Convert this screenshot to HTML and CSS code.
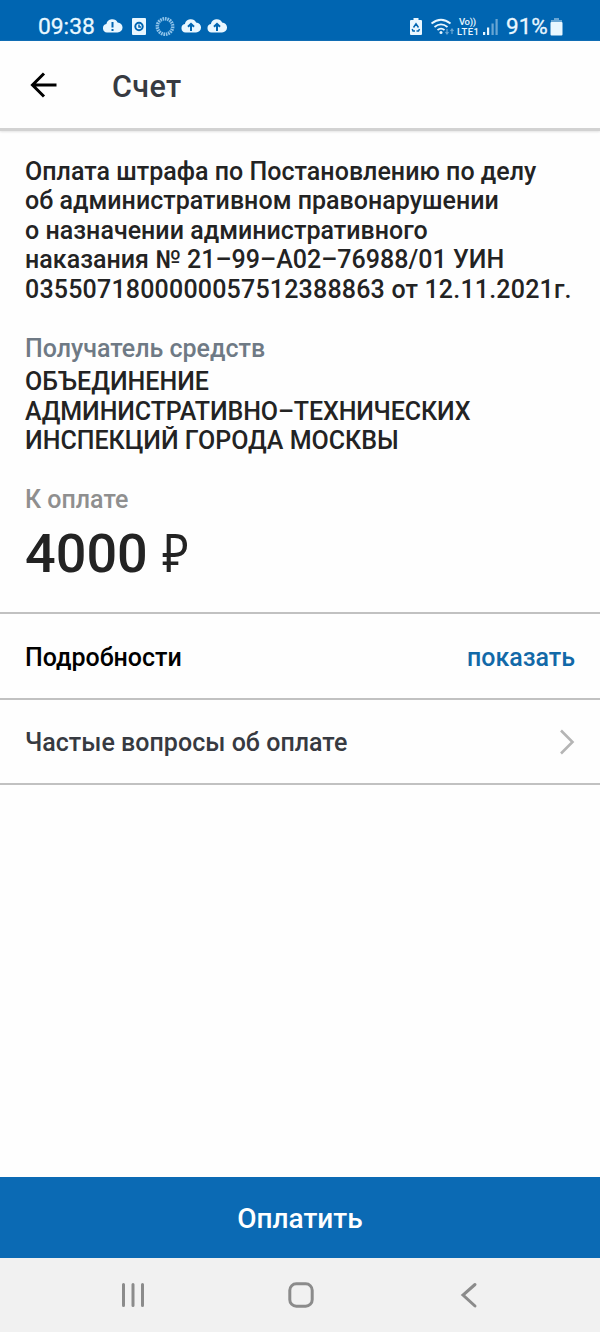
FILE: index.html
```html
<!DOCTYPE html>
<html lang="ru">
<head>
  <meta charset="UTF-8">
  <title>Счет</title>
  <link rel="stylesheet" href="styles.css">
</head>
<body>
  <div class="status-bar">
    <span class="time">09:38</span>
    <svg class="status-icons" width="130" height="24" viewBox="0 0 130 24">
      <defs>
        <path id="cloud" d="M5 17.500a4.300 4.300 0 0 1-.6-8.500A6 6 0 0 1 15.600 7.500A4.900 4.900 0 0 1 15.500 17.500z"/>
      </defs>
      <use href="#cloud" x="1"/>
      <path class="cut" d="M11.500 7v5.500M11.500 14v2"/>
      <rect x="31" y="3" width="14" height="17" rx="1"/>
      <circle class="cut" cx="38" cy="11.500" r="3.700"/>
      <path class="cut thin" d="M38 9.500v2.500h2"/>
      <circle class="spinner" cx="64" cy="11.500" r="7.700"/>
      <use href="#cloud" x="79.500"/>
      <path class="cut" d="M90 16V9M87 11.800l3-3 3 3"/>
      <use href="#cloud" x="105.500"/>
      <path class="cut" d="M116 16V9M113 11.800l3-3 3 3"/>
    </svg>
    <svg class="status-signal" width="92" height="24" viewBox="0 0 92 24">
      <path d="M5.500 3h5v2H13q1 0 1 1v13q0 1-1 1H3q-1 0-1-1V6q0-1 1-1h2.500z"/>
      <path class="cut thin" d="M5.500 12.500L8 8.800l2.500 3.700M11.500 14l-1 2h-2M7 16H5l-.8-2"/>
      <path class="line" d="M23.500 8.500q9.500-7.500 19 0M26.500 12q6.500-5.200 13 0M29.500 15q3.500-2.800 7 0"/>
      <circle cx="33" cy="17.500" r="1.500"/>
      <path class="line small faint" d="M39 14v5M37.500 17l1.500 2 1.500-2M44 19v-5M42.500 16l1.500-2 1.500 2"/>
      <text class="volte" x="51" y="10" textLength="17">Vo))</text>
      <text class="volte" x="49" y="20" textLength="22">LTE1</text>
      <rect x="75" y="17" width="2.200" height="3"/>
      <rect x="79" y="12.500" width="2.200" height="7.500"/>
      <rect class="faint" x="83.500" y="8.500" width="2.200" height="11.500"/>
      <rect class="faint" x="87.500" y="4" width="2.200" height="16"/>
    </svg>
    <span class="percent">91%</span>
    <svg class="battery" width="13" height="18" viewBox="0 0 13 18">
      <path class="faint" d="M4 0h5v2h3v3H1V2h3z"/>
      <rect x="0.500" y="4" width="12" height="13.500" rx="1"/>
    </svg>
  </div>

  <div class="header">
    <svg class="back" width="28" height="28" viewBox="0 0 28 28">
      <path d="M26.500 14H3M14 2.500L2.500 14L14 25.500"/>
    </svg>
    <h1>Счет</h1>
  </div>

  <div class="content">
    <p class="purpose">
      Оплата штрафа по Постановлению по делу<br>
      об административном правонарушении<br>
      о назначении административного<br>
      наказания № 21–99–А02–76988/01 УИН<br>
      <span class="uin">0355071800000057512388863 от 12.11.2021г.</span>
    </p>
    <p class="label">Получатель средств</p>
    <p class="payee">ОБЪЕДИНЕНИЕ<br><span class="tight">АДМИНИСТРАТИВНО–ТЕХНИЧЕСКИХ</span><br>ИНСПЕКЦИЙ ГОРОДА МОСКВЫ</p>
    <p class="label total">К оплате</p>
    <p class="amount">4000 <span class="currency">₽</span></p>
  </div>

  <div class="row">
    <span class="details">Подробности</span>
    <a class="show">показать</a>
  </div>
  <div class="row">
    <span class="faq">Частые вопросы об оплате</span>
    <svg class="chevron" width="16" height="26" viewBox="0 0 16 26">
      <path d="M2 1.500L13.500 13L2 24.500"/>
    </svg>
  </div>

  <button class="pay">Оплатить</button>

  <div class="nav-bar">
    <svg width="26" height="28" viewBox="0 0 26 28"><path d="M3.500 3.500v21M13 3.500v21M22.500 3.500v21"/></svg>
    <svg width="28" height="28" viewBox="0 0 28 28"><rect x="2.800" y="2.800" width="22.400" height="22.400" rx="6.500"/></svg>
    <svg width="26" height="28" viewBox="0 0 26 28"><path d="M19 3.500L7 14l12 11"/></svg>
  </div>
</body>
</html>
```
FILE: styles.css
```css
* {
  box-sizing: border-box;
}

body {
  margin: 0;
  height: 1332px;
  display: flex;
  flex-direction: column;
  background: #fefefe;
  color: #232323;
  font-family: Roboto, sans-serif;
  font-size: 25px;
  font-weight: 500;
  line-height: 29.4px;
}

p, h1 {
  margin: 0;
  font-weight: 500;
  white-space: nowrap;
}

.purpose,
.faq {
  letter-spacing: 0.03px;
}

.status-bar {
  display: flex;
  align-items: center;
  height: 41px;
  padding: 12px 37px 0 38px;
  background: #0065b1;
  color: #e9f7ff;
  fill: #e9f7ff;
}

.time {
  width: 63px;
  padding-top: 1px;
  font-size: 22.8px;
  font-weight: 400;
  -webkit-text-stroke: 0.3px #e9f7ff;
}

.status-signal {
  margin-left: auto;
}

.percent {
  margin-left: 6px;
  width: 44px;
  padding-top: 1px;
  font-size: 22.5px;
  font-weight: 400;
  -webkit-text-stroke: 0.3px #e9f7ff;
}

.cut {
  fill: none;
  stroke: #0065b1;
  stroke-width: 2;
}

.thin {
  stroke-width: 1.5;
}

.spinner {
  fill: none;
  stroke: #8fc4ea;
  stroke-width: 3.5;
  stroke-dasharray: 1.6 0.8;
}

.line {
  fill: none;
  stroke: #e9f7ff;
  stroke-width: 1.8;
}

.small {
  stroke-width: 1.2;
}

.faint {
  opacity: 0.45;
}

.volte {
  font-size: 9.5px;
  font-weight: 500;
}

.header {
  display: flex;
  align-items: center;
  height: 90px;
  padding: 0 30px;
  border-bottom: 3px solid #d2d2d2;
  box-shadow: 0 1px 2px #e4e4e4;
}

.back {
  fill: none;
  stroke: #000;
  stroke-width: 3;
}

h1 {
  margin-left: 54px;
  padding-top: 5px;
  font-size: 30.5px;
  line-height: 34px;
  letter-spacing: 0.4px;
  color: #373a41;
}

.content {
  height: 481px;
  padding: 26px 25px 0;
}

.uin {
  letter-spacing: 0.19px;
}

.tight {
  letter-spacing: -0.1px;
}

.label {
  margin-top: 30px;
  color: #6f7a85;
}

.payee {
  margin-top: 4px;
}

.total {
  margin-top: 29px;
  color: #8f8f8f;
}

.amount {
  margin-top: 8px;
  font-size: 54px;
  line-height: 63px;
}

.currency {
  display: inline-block;
  margin-left: -3px;
  font-family: "Noto Sans", sans-serif;
  font-size: 53px;
  font-weight: 400;
  line-height: 1;
  transform: scaleX(0.86);
  transform-origin: right;
}

.row {
  display: flex;
  align-items: center;
  justify-content: space-between;
  height: 86px;
  padding: 0 25px;
  border-top: 2px solid #c1c1c1;
}

.row + .row {
  height: 87px;
  border-bottom: 2px solid #c1c1c1;
}

.details,
.show,
.faq {
  padding-top: 3px;
}

.details {
  color: #000;
}

.show {
  color: #1269a8;
}

.faq {
  color: #373a41;
}

.chevron {
  fill: none;
  stroke: #b5b5b5;
  stroke-width: 2.6;
}

.pay {
  height: 81px;
  margin-top: auto;
  padding: 3px 0 0;
  border: none;
  background: #0b6ab4;
  color: #fff;
  font: inherit;
  font-size: 28px;
}

.nav-bar {
  display: flex;
  justify-content: space-between;
  align-items: center;
  height: 74px;
  padding: 0 118px 0 120px;
  background: #f1f1f1;
  fill: none;
  stroke: #8b8b8b;
  stroke-width: 3;
  stroke-linecap: round;
}
```
